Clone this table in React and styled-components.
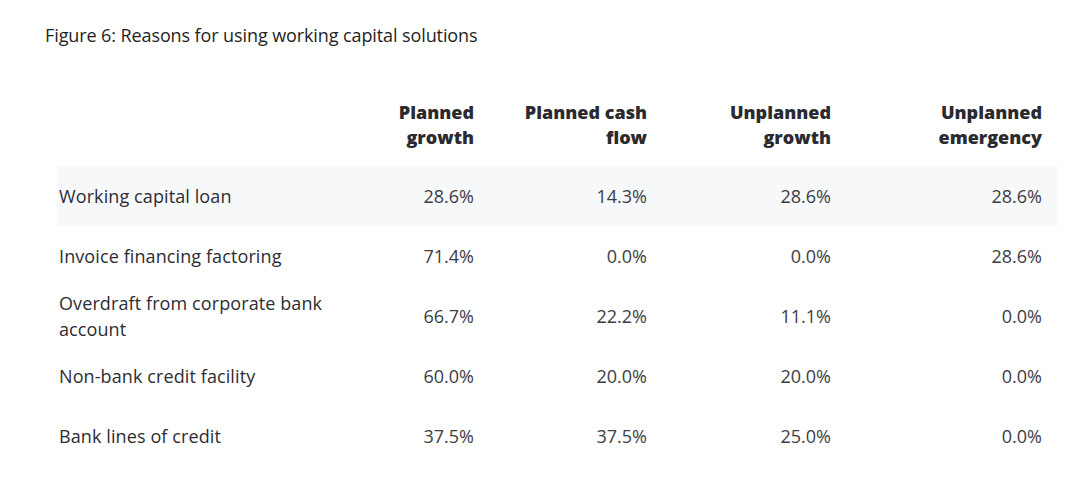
import React from 'react';
import styled, {createGlobalStyle} from 'styled-components';

const Global = createGlobalStyle`
  body {
    margin: 0;
    background: #ffffff;
    font-family: "Open Sans", Lato, sans-serif;
    color: #2d2d33;
  }
`;

const Page = styled.div`
  padding: 22px 0 0 45px;
`;

const Title = styled.h2`
  margin: 0 0 52px 0;
  font-size: 18px;
  font-weight: 400;
  line-height: 26px;
  letter-spacing: -0.1px;
  color: #1f1f24;
`;

const Table = styled.div`
  display: grid;
  grid-template-columns: 288px 145px 173px 184px 211px;
  margin-left: 12px;
  width: 1001px;
`;

const HeadCell = styled.div`
  padding: 0 16px 16px 16px;
  text-align: right;
  font-weight: 800;
  font-size: 18px;
  line-height: 25px;
  color: #2a2a30;
`;

const Row = styled.div`
  display: contents;
`;

const Cell = styled.div`
  display: flex;
  align-items: center;
  justify-content: ${p => (p.label ? 'flex-start' : 'flex-end')};
  min-height: 60px;
  padding: 0 16px 0 ${p => (p.label ? '2px' : '16px')};
  background: ${p => (p.shaded ? '#f7f8fa' : 'transparent')};
  font-size: 18px;
  line-height: 26px;
  letter-spacing: ${p => (p.label ? '0.1px' : '0')};
  color: ${p => (p.label ? '#2d2d33' : '#3d3d44')};
  box-sizing: border-box;
`;

const heads = ['Planned growth', 'Planned cash flow', 'Unplanned growth', 'Unplanned emergency'];

const rows = [
  ['Working capital loan', '28.6%', '14.3%', '28.6%', '28.6%'],
  ['Invoice financing factoring', '71.4%', '0.0%', '0.0%', '28.6%'],
  ['Overdraft from corporate bank account', '66.7%', '22.2%', '11.1%', '0.0%'],
  ['Non-bank credit facility', '60.0%', '20.0%', '20.0%', '0.0%'],
  ['Bank lines of credit', '37.5%', '37.5%', '25.0%', '0.0%'],
];

export default function App() {
  return (
    <Page>
      <Global/>
      <Title>Figure 6: Reasons for using working capital solutions</Title>
      <Table>
        <HeadCell/>
        {heads.map(h => <HeadCell key={h}>{h}</HeadCell>)}
        {rows.map((r, i) => (
          <Row key={r[0]}>
            {r.map((v, j) => (
              <Cell key={j} label={j === 0} shaded={i === 0}>{v}</Cell>
            ))}
          </Row>
        ))}
      </Table>
    </Page>
  );
}
